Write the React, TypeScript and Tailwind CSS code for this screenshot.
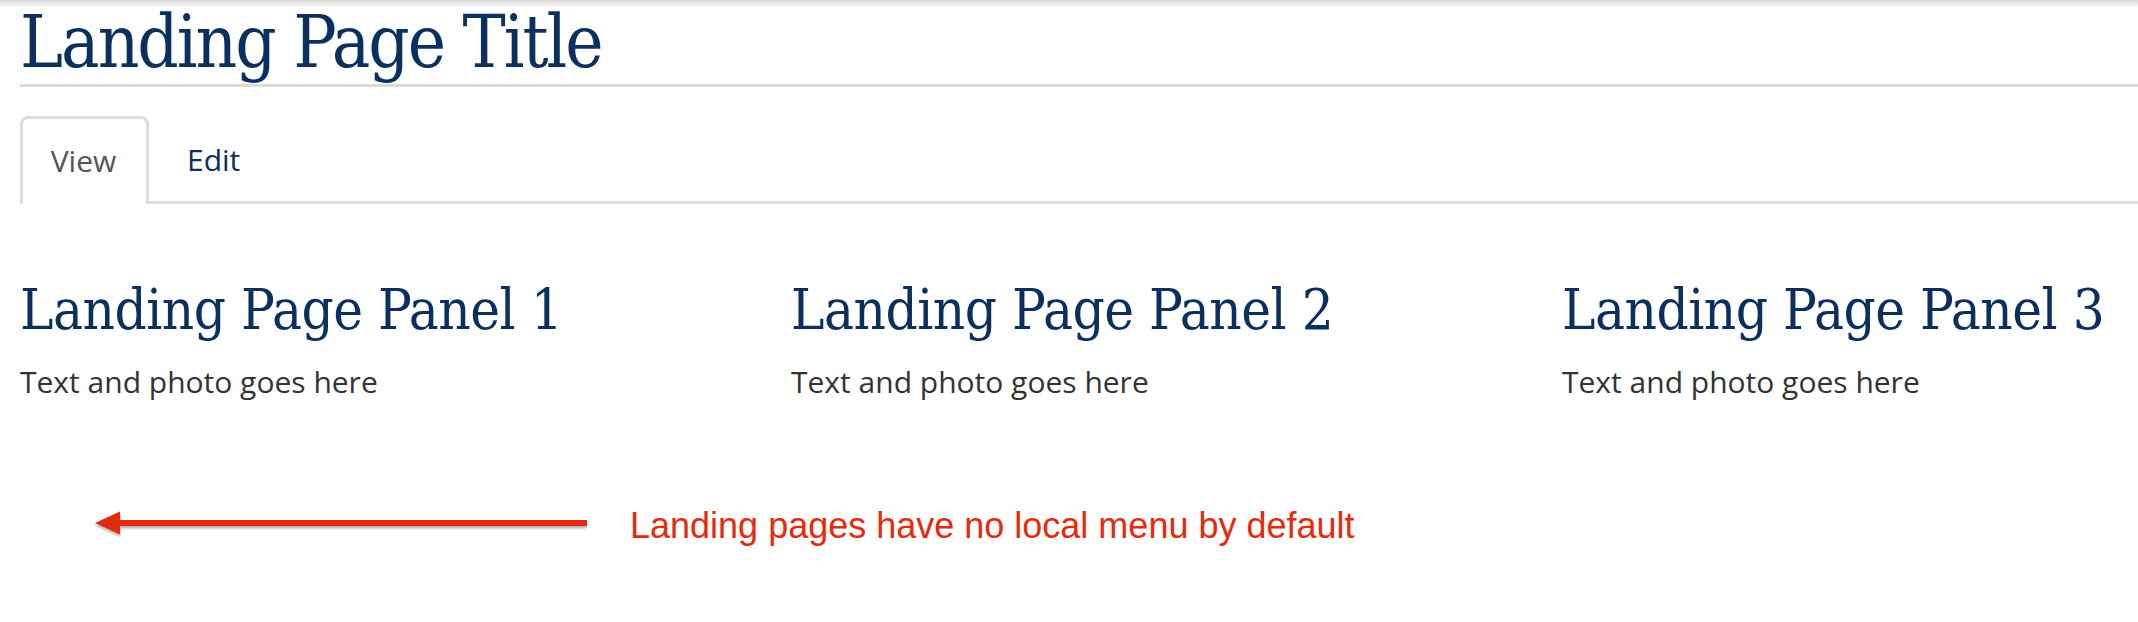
import React from "react";

const slab = { fontFamily: '"DejaVu Serif Condensed", "DejaVu Serif", serif' };

function Panel({ title }: { title: string }) {
  return (
    <div className="w-[771px] shrink-0">
      <h2 className="text-[56px] leading-none tracking-[-0.5px] text-[#0b2f5e] whitespace-nowrap" style={slab}>
        {title}
      </h2>
      <p className="mt-[29px] text-[30px] leading-none text-[#333333] font-['Open_Sans',sans-serif]">
        Text and photo goes here
      </p>
    </div>
  );
}

export default function App() {
  return (
    <div className="relative w-[2138px] h-[622px] overflow-hidden bg-white">
      <div className="absolute left-0 top-0 w-full h-[8px] bg-gradient-to-b from-[#d9d9d9] to-white" />
      <div className="pl-[20px] pt-[4px]">
        <h1
          className="text-[72px] leading-[76px] tracking-[-2px] text-[#0b2f5e] pb-[4px] border-b-[3px] border-[#dddad3] whitespace-nowrap"
          style={slab}
        >
          Landing Page Title
        </h1>
        <div className="mt-[30px] flex items-end border-b-[3px] border-[#dddddd] h-[87px]">
          <div className="relative -mb-[3px] w-[129px] h-[88px] border-[3px] border-b-0 border-[#dddddd] rounded-t-[8px] bg-white flex items-center justify-center">
            <span className="text-[30px] text-[#555555] font-['Open_Sans',sans-serif] -mt-[2px] -ml-[2px]">View</span>
          </div>
          <div className="h-[85px] flex items-center pl-[38px]">
            <span className="text-[30px] text-[#0b2f5e] font-['Open_Sans',sans-serif] mt-[1px]">Edit</span>
          </div>
        </div>
        <div className="mt-[78px] flex">
          <Panel title="Landing Page Panel 1" />
          <Panel title="Landing Page Panel 2" />
          <Panel title="Landing Page Panel 3" />
        </div>
      </div>
      <div className="mt-[105px] flex items-center pl-[95px]">
        <svg width="492" height="34" viewBox="0 0 492 34">
          <defs>
            <filter id="sh" x="-10%" y="-50%" width="120%" height="200%">
              <feDropShadow dx="0" dy="2" stdDeviation="1.5" floodColor="#000" floodOpacity="0.35" />
            </filter>
          </defs>
          <g filter="url(#sh)">
            <rect x="22" y="14" width="470" height="6" fill="#e32b0c" />
            <polygon points="0,17 25,5.5 25,28.5" fill="#e32b0c" />
          </g>
        </svg>
        <span className="ml-[43px] mt-[6px] text-[36px] leading-none text-[#e52b0c] font-['Liberation_Sans',Arial,sans-serif]">
          Landing pages have no local menu by default
        </span>
      </div>
    </div>
  );
}
